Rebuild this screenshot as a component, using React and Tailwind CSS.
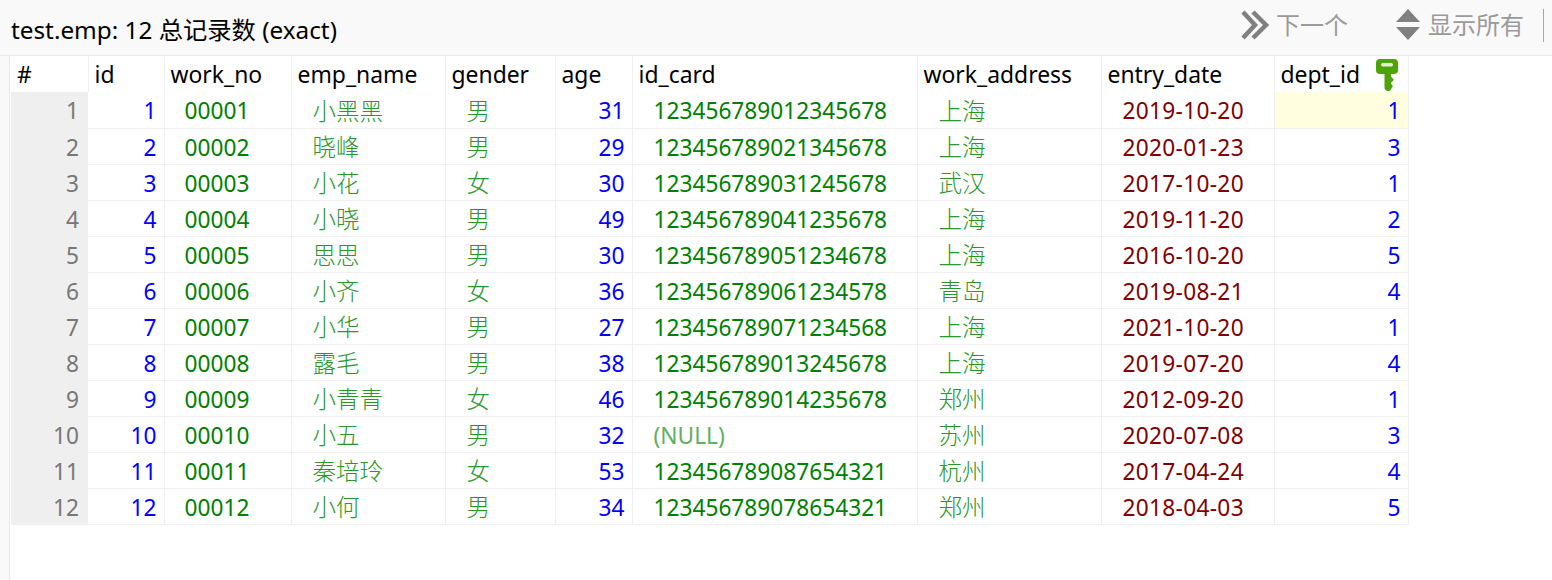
const rows = [
  [1, "00001", "小黑黑", "男", 31, "123456789012345678", "上海", "2019-10-20", 1],
  [2, "00002", "晓峰", "男", 29, "123456789021345678", "上海", "2020-01-23", 3],
  [3, "00003", "小花", "女", 30, "123456789031245678", "武汉", "2017-10-20", 1],
  [4, "00004", "小晓", "男", 49, "123456789041235678", "上海", "2019-11-20", 2],
  [5, "00005", "思思", "男", 30, "123456789051234678", "上海", "2016-10-20", 5],
  [6, "00006", "小齐", "女", 36, "123456789061234578", "青岛", "2019-08-21", 4],
  [7, "00007", "小华", "男", 27, "123456789071234568", "上海", "2021-10-20", 1],
  [8, "00008", "露毛", "男", 38, "123456789013245678", "上海", "2019-07-20", 4],
  [9, "00009", "小青青", "女", 46, "123456789014235678", "郑州", "2012-09-20", 1],
  [10, "00010", "小五", "男", 32, null, "苏州", "2020-07-08", 3],
  [11, "00011", "秦培玲", "女", 53, "123456789087654321", "杭州", "2017-04-24", 4],
  [12, "00012", "小何", "男", 34, "123456789078654321", "郑州", "2018-04-03", 5],
];

const headers = [
  ["#", "w-[77px]"],
  ["id", "w-[76px]"],
  ["work_no", "w-[127px]"],
  ["emp_name", "w-[154px]"],
  ["gender", "w-[110px]"],
  ["age", "w-[77px]"],
  ["id_card", "w-[285px]"],
  ["work_address", "w-[184px]"],
  ["entry_date", "w-[173px]"],
  ["dept_id", "w-[134px]"],
];

const td = "h-[36px] p-0 pt-[4px] leading-none border-r border-b border-[#efefef] whitespace-nowrap";
const cjk = "text-[#2a962a] pl-[21px] text-[23.500px] font-light";

function KeyIcon() {
  return (
    <svg width="24" height="33" viewBox="0 0 24 33" className="absolute right-[9px] top-[3px]">
      <path
        fill="#4fa30a"
        d="M5 0h14a4 4 0 0 1 4 4v7a4 4 0 0 1-4 4h-3v3l2.500 2v1.500L16 23.500v1.500l2 2-2.500 4a2.500 2.500 0 0 1-3 1c-2-.500-3-1.500-3-3.500V15H5a4 4 0 0 1-4-4V4a4 4 0 0 1 4-4z"
      />
      <rect x="6" y="4" width="12" height="3.500" rx="1.700" fill="#e4f2d2" />
    </svg>
  );
}

function NextIcon() {
  return (
    <svg width="30" height="32" viewBox="0 0 30 32" fill="none" stroke="#808080" strokeWidth="4.500">
      <path d="M3 3l12 13L3 29" />
      <path d="M13 3l13 13-13 13" />
    </svg>
  );
}

function ShowAllIcon() {
  return (
    <svg width="26" height="32" viewBox="0 0 26 32" fill="#808080">
      <path d="M13 0L25 13H1z" />
      <path d="M1 18h24L13 31z" />
    </svg>
  );
}

export default function App() {
  return (
    <div className="w-[1552px] h-[580px] overflow-hidden bg-white flex flex-col font-['Noto_Sans','Noto_Sans_CJK_SC',sans-serif] text-[22.700px] text-black">
      <div className="h-[56px] shrink-0 bg-[#f9f9f9] border-b border-[#e8e8e8] flex items-center pl-[11px] pr-[8px]">
        <div className="mt-[6px] text-[24.300px]">test.emp: 12 总记录数 (exact)</div>
        <div className="ml-auto mb-[5px] flex items-center text-[#9a9a9a] text-[24px]">
          <NextIcon />
          <span className="ml-[6px]">下一个</span>
          <div className="ml-[47px]"><ShowAllIcon /></div>
          <span className="ml-[7px]">显示所有</span>
          <div className="ml-[19px] w-px h-[33px] bg-[#a8a8a8]" />
        </div>
      </div>
      <div className="flex-1 flex min-h-0">
        <div className="w-[10px] shrink-0 bg-[#f9f9f9] border-r border-[#e8e8e8]" />
        <table className="table-fixed border-collapse self-start w-[1397px] ml-px">
          <thead>
            <tr>
              {headers.map(([h, w]) => (
                <th key={h} className={`${w} relative h-[36px] p-0 pt-[2px] pl-[6px] text-left text-[22.900px] font-normal leading-none border-r border-[#efefef] whitespace-nowrap`}>
                  {h}
                  {h === "dept_id" && <KeyIcon />}
                </th>
              ))}
            </tr>
          </thead>
          <tbody>
            {rows.map((r) => (
              <tr key={r[0]}>
                <td className={`${td} bg-[#efefef] text-[#777777] text-right pr-[9px] border-r-0`}>{r[0]}</td>
                <td className={`${td} text-[#0000ff] text-right pr-[7px]`}>{r[0]}</td>
                <td className={`${td} text-[#008000] pl-[20px]`}>{r[1]}</td>
                <td className={td + " " + cjk}>{r[2]}</td>
                <td className={td + " " + cjk}>{r[3]}</td>
                <td className={`${td} text-[#0000ff] text-right pr-[7px]`}>{r[4]}</td>
                {r[5] === null ? (
                  <td className={`${td} text-[#5fb05f] pl-[21px]`}>(NULL)</td>
                ) : (
                  <td className={`${td} text-[#008000] pl-[21px]`}>{r[5]}</td>
                )}
                <td className={td + " " + cjk}>{r[6]}</td>
                <td className={`${td} text-[#800000] pl-[21px] tracking-[0.300px]`}>{r[7]}</td>
                <td className={`${td} text-[#0000ff] text-right pr-[7px] ${r[0] === 1 ? "bg-[#ffffe0]" : ""}`}>{r[8]}</td>
              </tr>
            ))}
          </tbody>
        </table>
      </div>
    </div>
  );
}
